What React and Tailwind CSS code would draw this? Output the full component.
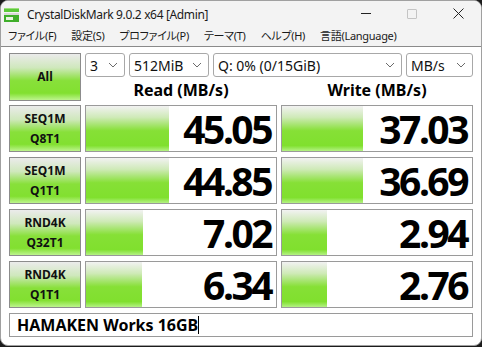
import React from 'react';

const rows = [
  { a: 'SEQ1M', b: 'Q8T1', read: '45.05', write: '37.03', rw: 83, ww: 81 },
  { a: 'SEQ1M', b: 'Q1T1', read: '44.85', write: '36.69', rw: 83, ww: 81 },
  { a: 'RND4K', b: 'Q32T1', read: '7.02', write: '2.94', rw: 57, ww: 45 },
  { a: 'RND4K', b: 'Q1T1', read: '6.34', write: '2.76', rw: 56, ww: 45 },
];

const menu = ['ファイル(F)', '設定(S)', 'プロファイル(P)', 'テーマ(T)', 'ヘルプ(H)', '言語(Language)'];

const Chevron = () => (
  <svg width="10" height="6" viewBox="0 0 10 6" className="shrink-0">
    <path d="M1 1l4 4 4-4" fill="none" stroke="#6b6b6b" strokeWidth="1" />
  </svg>
);

const Combo = ({ w, children }) => (
  <div className={`${w} h-[24px] flex items-center justify-between pl-[4px] pr-[6px] border border-[#a8a8a8] rounded-[3px] bg-white text-[14px] text-[#111]`}>
    <span>{children}</span>
    <Chevron />
  </div>
);

const Cell = ({ value, bar }) => (
  <div className="relative w-[192px] h-full border border-[#9a9a9a] bg-white flex items-center justify-end pr-[5px]">
    <div
      className="absolute left-0 top-0 bottom-0 bg-[linear-gradient(to_bottom,#f2f2f2_0%,#cfeab8_25%,#86e036_55%,#80e02e_88%,#b4f284_100%)]"
      style={{ width: bar }}
    />
    <span className="relative text-[39px] font-bold leading-none tracking-[-2.5px] text-black">{value}</span>
  </div>
);

const TestButton = ({ children }) => (
  <div className="w-[72px] h-full shrink-0 border border-[#8c8c8c] bg-[linear-gradient(to_bottom,#ebebeb_0%,#cfe8bc_30%,#88e03a_58%,#82e030_85%,#bdf48e_100%)] flex flex-col items-center justify-center text-[12px] font-bold leading-[20px] text-[#111]">
    {children}
  </div>
);

export default function App() {
  return (
    <div className="w-[482px] h-[347px] bg-[#1c1c1c] font-['Noto_Sans','Noto_Sans_CJK_JP',sans-serif]">
      <div className="w-[482px] h-[346px] bg-white rounded-[8px] border border-[#a0a0a0] overflow-hidden flex flex-col">
        {/* title bar */}
        <div className="h-[25px] shrink-0 bg-[#f3f3f3] flex items-center">
          <svg width="16" height="16" viewBox="0 0 16 16" className="ml-[3px] mt-[2px]">
            <rect x="0" y="1" width="15" height="4" fill="#5cc83a" />
            <rect x="0" y="1" width="15" height="1" fill="#9be07c" />
            <rect x="0" y="6" width="15" height="2" fill="#d8d8d8" />
            <rect x="0" y="8" width="15" height="7" fill="#3fae2a" />
            <rect x="2" y="10" width="7" height="3" fill="#e8f5e0" />
          </svg>
          <span className="ml-[7px] mt-[3px] text-[12px] tracking-[-0.35px] text-[#1a1a1a]">CrystalDiskMark 9.0.2 x64 [Admin]</span>
          <div className="ml-auto flex items-center h-full">
            <div className="w-[46px] h-full flex items-center justify-center">
              <div className="w-[10px] h-px bg-[#222]" />
            </div>
            <div className="w-[46px] h-full flex items-center justify-center">
              <div className="w-[10px] h-[10px] border border-[#c4c4c4] rounded-[1px]" />
            </div>
            <div className="w-[46px] h-full flex items-center justify-center">
              <svg width="11" height="11" viewBox="0 0 11 11">
                <path d="M0.5 0.5l10 10M10.5 0.5l-10 10" stroke="#222" strokeWidth="1" />
              </svg>
            </div>
          </div>
        </div>
        {/* menu bar */}
        <div className="h-[21px] shrink-0 bg-[#f3f3f3] flex items-center pl-[7px] gap-x-[15px] text-[11px] tracking-[-0.3px] text-[#1a1a1a] [font-feature-settings:'palt'] border-b border-[#8a8a8a]">
          {menu.map((m) => (
            <span key={m}>{m}</span>
          ))}
        </div>
        {/* content */}
        <div className="flex flex-col pl-[8px] pt-[6px]">
          <div className="flex h-[48px]">
            <TestButton>
              <span className="text-[12px]">All</span>
            </TestButton>
            <div className="ml-[4px] flex flex-col">
              <div className="flex gap-x-[4px]">
                <Combo w="w-[40px]">3</Combo>
                <Combo w="w-[80px]">512MiB</Combo>
                <Combo w="w-[189px]">Q: 0% (0/15GiB)</Combo>
                <Combo w="w-[67px]">MB/s</Combo>
              </div>
              <div className="flex gap-x-[4px] mt-[3px] text-[16px] font-bold text-black leading-[20px]">
                <div className="w-[192px] text-center">Read (MB/s)</div>
                <div className="w-[192px] text-center">Write (MB/s)</div>
              </div>
            </div>
          </div>
          <div className="flex flex-col gap-y-[5px] mt-[4px]">
            {rows.map((r) => (
              <div key={r.a + r.b} className="flex h-[47px]">
                <TestButton>
                  <span>{r.a}</span>
                  <span>{r.b}</span>
                </TestButton>
                <div className="ml-[4px] flex gap-x-[4px] h-full">
                  <Cell value={r.read} bar={r.rw} />
                  <Cell value={r.write} bar={r.ww} />
                </div>
              </div>
            ))}
            <div className="w-[464px] h-[24px] border border-[#9a9a9a] bg-white flex items-center pl-[7px] text-[16px] font-bold text-black">
              <span>HAMAKEN Works 16GB</span>
              <span className="w-px h-[18px] bg-black" />
            </div>
          </div>
        </div>
      </div>
    </div>
  );
}
